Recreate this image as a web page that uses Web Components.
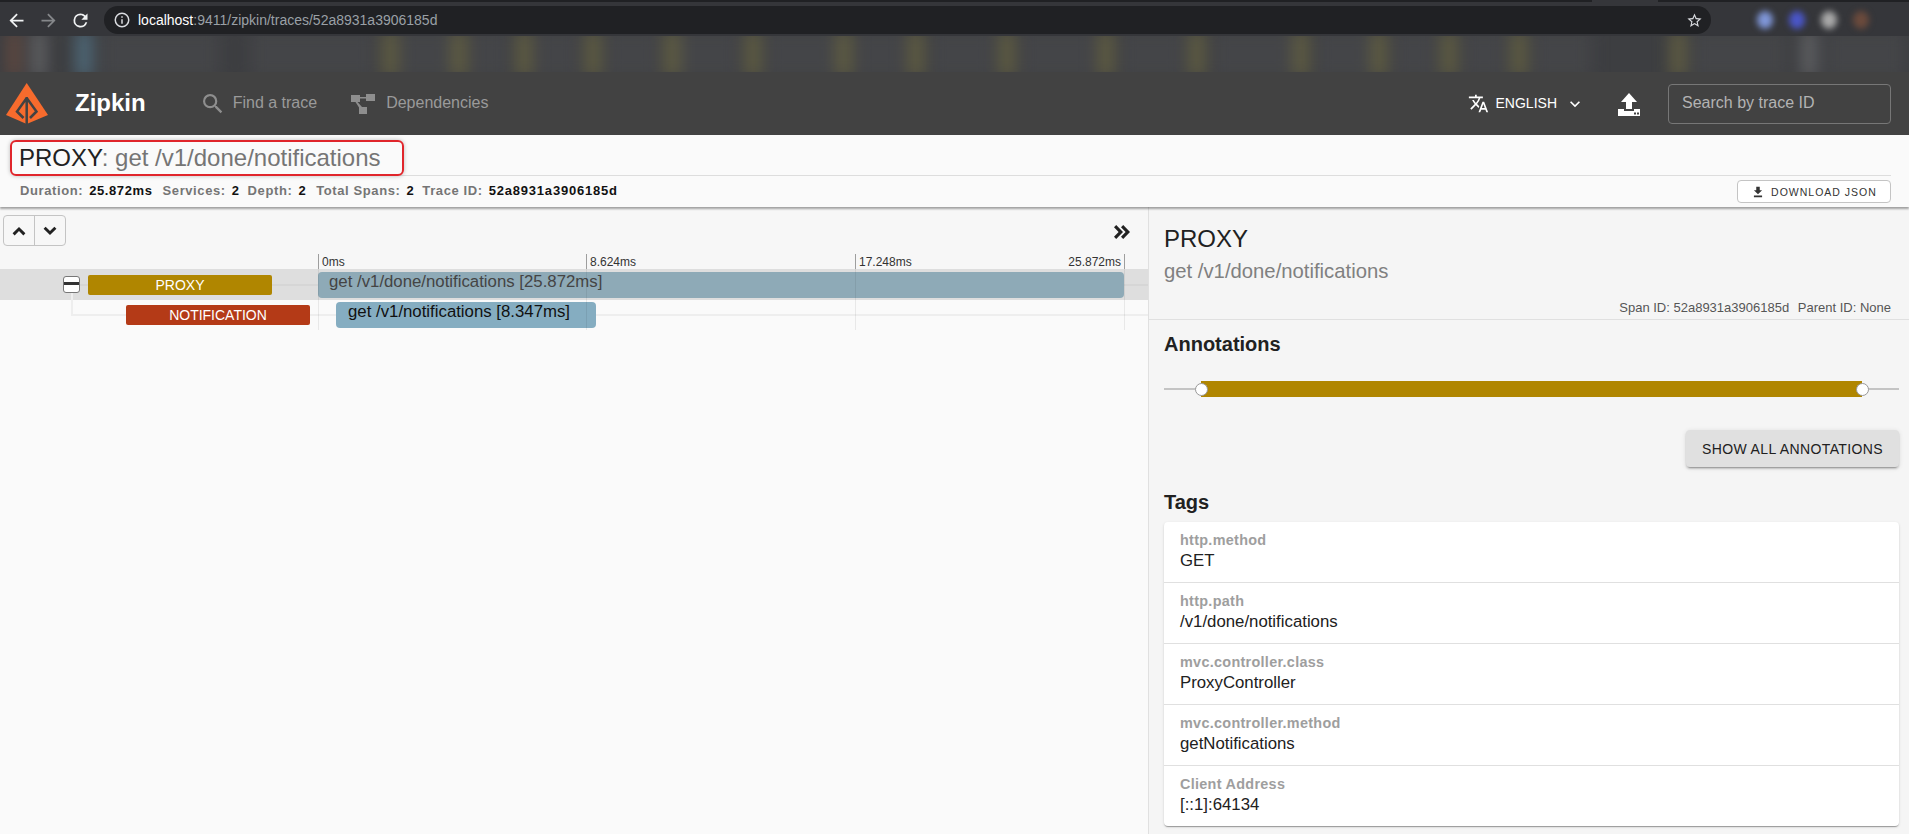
<!DOCTYPE html>
<html>
<head>
<meta charset="utf-8">
<style>
    html, body { margin: 0; padding: 0; height: 100%; }
    body {
        width: 1909px;
        height: 834px;
        overflow: hidden;
        display: flex;
        flex-direction: column;
        font-family: "Liberation Sans", Arial, sans-serif;
        background: #fafafa;
    }
</style>
</head>
<body>
<browser-chrome></browser-chrome>
<zipkin-header></zipkin-header>
<trace-summary></trace-summary>
<trace-page>
    <trace-timeline slot="left"></trace-timeline>
    <span-detail slot="right">
        <tag-row label="http.method" value="GET"></tag-row>
        <tag-row label="http.path" value="/v1/done/notifications"></tag-row>
        <tag-row label="mvc.controller.class" value="ProxyController"></tag-row>
        <tag-row label="mvc.controller.method" value="getNotifications"></tag-row>
        <tag-row label="Client Address" value="[::1]:64134"></tag-row>
    </span-detail>
</trace-page>

<script>
// blurred bookmarks: grey labels first, then the folder icons on top
const BOOKMARK_GREYS = [[100, 120], [250, 125], [400, 50], [470, 40], [535, 45], [605, 55], [680, 60], [765, 70], [855, 50], [930, 65], [1020, 75], [1120, 65], [1212, 80], [1315, 55], [1392, 45], [1462, 45], [1532, 60], [1692, 95], [1825, 80]];
const BOOKMARK_ICONS = [
    [8, 12, '#664a40'], [33, 12, '#666769'], [76, 16, '#4f6a7a'],
    ...[390, 459, 524, 593, 672, 753, 844, 916, 1007, 1106, 1197, 1301, 1379, 1449, 1519, 1678].map(x => [x - 8, 16, '#605d42']),
    [1802, 14, '#626366']
];

const chromeTemplate = document.createElement('template');
chromeTemplate.innerHTML = `
<style>
    :host { display: block; height: 72px; background: #35363a; flex: none; overflow: hidden; }
    .tabs { height: 2px; display: flex; background: #202124; }
    .tabs i { display: block; width: 66px; margin-left: 1592px; background: #35363a; }
    .toolbar { height: 34px; display: flex; align-items: center; padding-top: 2px; box-sizing: border-box; }
    .nav { width: 104px; display: flex; align-items: center; flex: none; padding-left: 6px; box-sizing: border-box; gap: 11px; }
    .nav svg { width: 21px; height: 21px; fill: #f1f3f4; flex: none; }
    .nav svg.off { fill: #85878a; }
    .omnibox {
        width: 1607px; height: 28px; flex: none;
        background: #202124; border-radius: 14px;
        display: flex; align-items: center;
        font-size: 14px; color: #9aa0a6;
        box-sizing: border-box; padding-left: 9px;
    }
    .omnibox b { font-weight: normal; color: #fff; }
    .omnibox svg { width: 18px; height: 18px; fill: #dadce0; margin-right: 7px; flex: none; }
    .omnibox .star { margin: 0 8px 0 auto; width: 17px; height: 17px; }
    .ext { display: flex; align-items: center; gap: 16px; padding-left: 46px; filter: blur(3px); }
    .ext i { width: 16px; height: 18px; border-radius: 50%; display: block; }
    .clip { height: 36px; overflow: hidden; background: #3d3e41; }
    .bookmarks { height: 36px; position: relative; filter: blur(8px); }
    .bookmarks i { position: absolute; top: -6px; height: 48px; }
</style>
<div class="tabs"><i></i></div>
<div class="toolbar">
    <div class="nav">
        <svg viewBox="0 0 24 24"><path d="M20 11H7.830l5.590-5.590L12 4l-8 8 8 8 1.410-1.410L7.830 13H20v-2z"/></svg>
        <svg class="off" viewBox="0 0 24 24"><path d="M12 4l-1.410 1.410L16.170 11H4v2h12.170l-5.580 5.590L12 20l8-8z"/></svg>
        <svg viewBox="0 0 24 24"><path d="M17.650 6.350A7.960 7.960 0 0 0 12 4a8 8 0 1 0 7.730 10h-2.080A6 6 0 1 1 12 6c1.660 0 3.140.69 4.220 1.780L13 11h7V4l-2.350 2.350z"/></svg>
    </div>
    <div class="omnibox">
        <svg viewBox="0 0 24 24"><path d="M11 7h2v2h-2zm0 4h2v6h-2zm1-9a10 10 0 1 0 0 20 10 10 0 0 0 0-20zm0 18a8 8 0 1 1 0-16 8 8 0 0 1 0 16z"/></svg>
        <span><b>localhost</b>:9411/zipkin/traces/52a8931a3906185d</span>
        <svg class="star" viewBox="0 0 24 24"><path d="M22 9.240l-7.190-.62L12 2 9.190 8.630 2 9.240l5.460 4.730L5.820 21 12 17.270 18.180 21l-1.630-7.030L22 9.240zM12 15.400l-3.760 2.270 1-4.280-3.320-2.880 4.380-.38L12 6.100l1.710 4.040 4.380.38-3.320 2.880 1 4.280L12 15.400z"/></svg>
    </div>
    <div class="ext">
        <i style="background:#7f96d8"></i>
        <i style="background:#4a56c8"></i>
        <i style="background:#a9a9a9"></i>
        <i style="background:#6b4a3c"></i>
    </div>
</div>
<div class="clip"><div class="bookmarks"></div></div>
`;

class BrowserChrome extends HTMLElement {
    constructor() {
        super();
        this.attachShadow({ mode: 'open' });
        this.shadowRoot.appendChild(chromeTemplate.content.cloneNode(true));
        const bar = this.shadowRoot.querySelector('.bookmarks');
        const blobs = BOOKMARK_GREYS.map(([x, w]) => [x, w, '#444548']).concat(BOOKMARK_ICONS);
        blobs.forEach(([x, w, color]) => {
            const blob = document.createElement('i');
            blob.style.left = x + 'px';
            blob.style.width = w + 'px';
            blob.style.background = color;
            bar.appendChild(blob);
        });
    }
}

const headerTemplate = document.createElement('template');
headerTemplate.innerHTML = `
<style>
    :host {
        display: flex; align-items: center; flex: none;
        height: 63px; background: #424242; color: #fff;
        box-sizing: border-box; padding: 0 18px 0 6px;
    }
    .logo { width: 42px; height: 41px; flex: none; }
    .brand { font-size: 24px; font-weight: bold; margin-left: 27px; padding-bottom: 2px; }
    .nav { display: flex; align-items: center; color: #9a9a9a; font-size: 16px; }
    .nav span { padding-bottom: 2px; }
    .nav svg { fill: #8e8e8e; flex: none; }
    .find { margin-left: 56px; }
    .find svg { width: 22px; height: 22px; margin-right: 9px; }
    .deps { margin-left: 34px; }
    .deps svg { width: 24px; height: 20px; margin-right: 11px; }
    .spacer { flex: 1; }
    .lang { display: flex; align-items: center; font-size: 14px; }
    .lang span { padding-bottom: 1px; }
    .lang svg { fill: #fff; }
    .lang .tr { width: 21px; height: 21px; margin-right: 7px; }
    .lang .chev { width: 20px; height: 20px; margin-left: 8px; }
    .upload { width: 24px; height: 24px; margin-left: 32px; fill: #fff; flex: none; }
    .search {
        width: 223px; height: 40px; margin-left: 27px; flex: none;
        border: 1px solid #777; border-radius: 4px;
        box-sizing: border-box; padding: 0 0 2px 13px;
        display: flex; align-items: center;
        font-size: 16px; color: #b3b3b3;
    }
</style>
<svg class="logo" viewBox="0 0 42 41">
    <path fill="#f76b2d" d="M20.700 0 42 32 20.700 41 0 32z"/>
    <path fill="none" stroke="#424242" stroke-width="2.500" d="M20.700 15 11 28.500 17.500 35M20.700 15 30.500 28.500 24 35M20.700 14V41"/>
</svg>
<span class="brand">Zipkin</span>
<div class="nav find">
    <svg viewBox="0 0 24 24"><path d="M15.500 14h-.79l-.28-.27A6.470 6.470 0 0 0 16 9.500 6.500 6.500 0 1 0 9.500 16c1.610 0 3.090-.59 4.230-1.570l.27.28v.79l5 4.990L20.490 19l-4.990-5zm-6 0C7.010 14 5 11.990 5 9.500S7.010 5 9.500 5 14 7.010 14 9.500 11.990 14 9.500 14z" transform="translate(-2.500 -2.500) scale(1.2)"/></svg>
    <span>Find a trace</span>
</div>
<div class="nav deps">
    <svg viewBox="0 0 24 20"><path d="M0 1h9v2h6V0h9v7h-9V4.500H9V8H6.500l4.500 5h5v7H8v-6.500L4.500 8H0z"/></svg>
    <span>Dependencies</span>
</div>
<div class="spacer"></div>
<div class="lang">
    <svg class="tr" viewBox="0 0 24 24"><path d="M12.870 15.070l-2.540-2.510.03-.03A17.520 17.520 0 0 0 14.070 6H17V4h-7V2H8v2H1v1.990h11.170C11.500 7.920 10.440 9.750 9 11.350 8.070 10.320 7.300 9.190 6.690 8h-2c.73 1.630 1.730 3.170 2.980 4.560l-5.090 5.020L4 19l5-5 3.110 3.110.76-2.040zM18.500 10h-2L12 22h2l1.120-3h4.750L21 22h2l-4.500-12zm-2.620 7l1.620-4.330L19.120 17h-3.240z"/></svg>
    <span>ENGLISH</span>
    <svg class="chev" viewBox="0 0 24 24"><path d="M7.410 8.590 12 13.170l4.590-4.580L18 10l-6 6-6-6z"/></svg>
</div>
<svg class="upload" viewBox="0 0 24 24"><path d="M12 1 20 10h-5v7H9v-7H4zM1 17h6v2h10v-2h6v7H1zM17 20.500h2v2h-2zM20 20.500h2v2h-2z" fill-rule="evenodd"/></svg>
<div class="search">Search by trace ID</div>
`;

class ZipkinHeader extends HTMLElement {
    constructor() {
        super();
        this.attachShadow({ mode: 'open' });
        this.shadowRoot.appendChild(headerTemplate.content.cloneNode(true));
    }
}

const summaryTemplate = document.createElement('template');
summaryTemplate.innerHTML = `
<style>
    :host {
        display: block; flex: none; height: 72px;
        background: #fafafa;
        box-shadow: 0 2px 2px rgba(0,0,0,.35);
        position: relative; z-index: 2;
        box-sizing: border-box; padding: 5px 18px 0 16px;
    }
    .title {
        display: inline-block; box-sizing: border-box;
        height: 36px; width: 394px; margin-left: -6px;
        border: 2px solid #e0252b; border-radius: 6px;
        box-shadow: 0 0 4px rgba(0,0,0,.25);
        padding-left: 7px; line-height: 32px;
        font-size: 24px; color: #757575; white-space: nowrap;
        position: relative;
    }
    .title b { font-weight: normal; color: #212121; }
    .titlebar { height: 35px; border-bottom: 1px solid #ddd; }
    .info { display: flex; align-items: center; height: 29px; padding-left: 4px; font-size: 13px; font-weight: bold; letter-spacing: .6px; }
    .info span { color: #757575; margin-right: 6px; }
    .info b { color: #111; margin-right: 10px; }
    .info b.num { margin-right: 8px; }
    .info b.id { margin-right: 0; letter-spacing: .8px; }
    button {
        margin-left: auto; width: 154px; height: 23px; margin-top: 2px; flex: none;
        display: flex; align-items: center; justify-content: center;
        background: #fff; border: 1px solid #c4c4c4; border-radius: 4px;
        font: 10.500px "Liberation Sans", Arial, sans-serif; letter-spacing: 1px;
        color: #333; padding: 0;
    }
    button svg { width: 14px; height: 14px; margin-right: 6px; fill: #333; }
</style>
<div class="titlebar"><div class="title"><b>PROXY</b>: get /v1/done/notifications</div></div>
<div class="info">
    <span>Duration:</span><b>25.872ms</b>
    <span>Services:</span><b class="num">2</b>
    <span>Depth:</span><b>2</b>
    <span>Total Spans:</span><b class="num">2</b>
    <span>Trace ID:</span><b class="id">52a8931a3906185d</b>
    <button><svg viewBox="0 0 24 24"><path d="M19 9h-4V3H9v6H5l7 7 7-7zM5 18v3h14v-3z"/></svg>DOWNLOAD JSON</button>
</div>
`;

class TraceSummary extends HTMLElement {
    constructor() {
        super();
        this.attachShadow({ mode: 'open' });
        this.shadowRoot.appendChild(summaryTemplate.content.cloneNode(true));
    }
}

const pageTemplate = document.createElement('template');
pageTemplate.innerHTML = `
<style>
    :host { display: grid; grid-template-columns: 1148px 761px; flex: 1; min-height: 0; }
</style>
<slot name="left"></slot>
<slot name="right"></slot>
`;

class TracePage extends HTMLElement {
    constructor() {
        super();
        this.attachShadow({ mode: 'open' });
        this.shadowRoot.appendChild(pageTemplate.content.cloneNode(true));
    }
}

const timelineTemplate = document.createElement('template');
timelineTemplate.innerHTML = `
<style>
    :host { display: block; background: #fafafa; position: relative; }
    .tools {
        height: 47px; background: #f7f7f7; box-sizing: border-box;
        display: flex; align-items: flex-start; justify-content: space-between;
        padding: 8px 18px 0 3px;
    }
    .updown {
        display: flex; width: 63px; height: 31px; box-sizing: border-box;
        border: 1px solid #c4c4c4; border-radius: 4px;
    }
    .updown div { flex: 1; display: flex; align-items: center; justify-content: center; }
    .updown div + div { border-left: 1px solid #c4c4c4; }
    .updown svg { width: 14px; height: 14px; fill: #222; }
    .collapse { width: 16px; height: 14px; margin-top: 10px; fill: #222; }
    .ticks { display: block; height: 15px; background: #f7f7f7; position: relative; font-size: 12px; color: #333; }
    .ticks span { position: absolute; top: 0; height: 100%; padding-left: 3px; border-left: 1px solid #aaa; line-height: 17px; white-space: nowrap; }
    .ticks .last { padding: 0 3px 0 0; border-left: 0; border-right: 1px solid #aaa; right: 23px; }
    .row { height: 31px; position: relative; }
    .row.sel { background: #dedede; }
    .rule { position: absolute; left: 72px; right: 0; top: 15px; height: 2px; background: #d6d6d6; }
    .row.kid .rule { left: 71px; top: 14px; background: #eee; }
    .elbow { position: absolute; left: 71px; top: -7px; width: 2px; height: 22px; background: #eee; }
    .minus {
        position: absolute; left: 63px; top: 7px; width: 17px; height: 17px;
        box-sizing: border-box; border: 1px solid #777; border-radius: 3px; background: #fff;
    }
    .minus::after { content: ""; display: block; height: 3px; margin-top: 5px; background: #333; }
    .svc {
        position: absolute; top: 6px; height: 20px; border-radius: 2px;
        color: #fff; font-size: 14px; line-height: 20px; text-align: center; box-sizing: border-box;
    }
    .bar {
        position: absolute; top: 3px; height: 26px; border-radius: 4px; box-sizing: border-box;
        font-size: 16.800px; line-height: 20px; white-space: nowrap;
    }
    .kid .svc { top: 5px; }
    .kid .bar { top: 2px; }
    .gridline { position: absolute; top: 47px; height: 76px; width: 1px; background: rgba(0,0,0,.07); z-index: 1; pointer-events: none; }
</style>
<div class="tools">
    <div class="updown">
        <div><svg viewBox="0 0 24 24"><path d="M12 5 1 16l3.500 3.500L12 12l7.500 7.500L23 16z"/></svg></div>
        <div><svg viewBox="0 0 24 24"><path d="M12 19 1 8l3.500-3.500L12 12l7.500-7.500L23 8z"/></svg></div>
    </div>
    <svg class="collapse" viewBox="0 0 16 14"><path d="M2.200 0 9 7l-6.800 7L0 11.700 4.600 7 0 2.300zM9.200 0 16 7l-6.800 7L7 11.700 11.600 7 7 2.300z"/></svg>
</div>
<div class="ticks">
    <span style="left:318px">0ms</span>
    <span style="left:586px">8.624ms</span>
    <span style="left:855px">17.248ms</span>
    <span class="last">25.872ms</span>
</div>
<i class="gridline" style="left:318px"></i>
<i class="gridline" style="left:586px"></i>
<i class="gridline" style="left:855px"></i>
<i class="gridline" style="left:1124px"></i>
<div class="row sel">
    <div class="rule"></div>
    <div class="minus"></div>
    <div class="svc" style="left:88px;width:184px;background:#b08600">PROXY</div>
    <div class="bar" style="left:318px;width:806px;background:#8eaab7;color:#444;padding-left:11px">get /v1/done/notifications [25.872ms]</div>
</div>
<div class="row kid">
    <div class="rule"></div>
    <div class="elbow"></div>
    <div class="svc" style="left:126px;width:184px;background:#b43a17">NOTIFICATION</div>
    <div class="bar" style="left:336px;width:260px;background:#85adc1;color:#111;padding-left:12px">get /v1/notifications [8.347ms]</div>
</div>
`;

class TraceTimeline extends HTMLElement {
    constructor() {
        super();
        this.attachShadow({ mode: 'open' });
        this.shadowRoot.appendChild(timelineTemplate.content.cloneNode(true));
    }
}

const detailTemplate = document.createElement('template');
detailTemplate.innerHTML = `
<style>
    :host { display: block; background: #f5f5f5; border-left: 1px solid #e0e0e0; box-sizing: border-box; }
    .head { height: 113px; border-bottom: 1px solid #e0e0e0; padding: 18px 18px 0 15px; box-sizing: border-box; }
    .svc { font-size: 24px; line-height: 28px; color: #212121; }
    .name { font-size: 20.300px; line-height: 24px; color: #808080; margin-top: 6px; }
    .ids { text-align: right; font-size: 13px; color: #555; margin-top: 18px; line-height: 14px; }
    .ids span { margin-left: 5px; }
    .body { padding: 0 10px 0 15px; }
    h2 { font-size: 20px; line-height: 24px; font-weight: bold; color: #212121; margin: 0; }
    .annot { padding-top: 12px; }
    .track { position: relative; height: 16px; margin-top: 25px; }
    .track .line { position: absolute; left: 0; right: 0; top: 7px; height: 2px; background: #c4c4c4; }
    .track .fill { position: absolute; left: 37px; width: 661px; top: 0; height: 16px; background: #b08600; }
    .track i { position: absolute; top: 2px; width: 13px; height: 13px; border-radius: 50%; background: #fff; border: 1px solid #999; box-sizing: border-box; }
    .actions { display: flex; justify-content: flex-end; margin-top: 33px; }
    button {
        height: 37px; width: 213px; border: 0; border-radius: 4px; background: #e0e0e0;
        font: 14px "Liberation Sans", Arial, sans-serif; letter-spacing: .4px; color: #212121; padding: 0;
        box-shadow: 0 3px 1px -2px rgba(0,0,0,.2), 0 2px 2px 0 rgba(0,0,0,.14), 0 1px 5px 0 rgba(0,0,0,.12);
    }
    .tags-title { margin-top: 23px; }
    .card {
        margin-top: 8px; background: #fff; border-radius: 4px;
        box-shadow: 0 2px 1px -1px rgba(0,0,0,.2), 0 1px 1px 0 rgba(0,0,0,.14), 0 1px 3px 0 rgba(0,0,0,.12);
    }
</style>
<div class="head">
    <div class="svc">PROXY</div>
    <div class="name">get /v1/done/notifications</div>
    <div class="ids"><span>Span ID: 52a8931a3906185d</span> <span>Parent ID: None</span></div>
</div>
<div class="body">
    <div class="annot">
        <h2>Annotations</h2>
        <div class="track">
            <div class="line"></div>
            <div class="fill"></div>
            <i style="left:31px"></i>
            <i style="left:692px"></i>
        </div>
        <div class="actions"><button>SHOW ALL ANNOTATIONS</button></div>
    </div>
    <h2 class="tags-title">Tags</h2>
    <div class="card"><slot></slot></div>
</div>
`;

class SpanDetail extends HTMLElement {
    constructor() {
        super();
        this.attachShadow({ mode: 'open' });
        this.shadowRoot.appendChild(detailTemplate.content.cloneNode(true));
    }
}

const tagRowTemplate = document.createElement('template');
tagRowTemplate.innerHTML = `
<style>
    :host { display: block; height: 61px; box-sizing: border-box; padding: 10px 16px 0; border-bottom: 1px solid #e0e0e0; }
    :host(:last-child) { border-bottom: 0; height: 60px; }
    .label { font-size: 14.400px; font-weight: bold; letter-spacing: .3px; line-height: 16px; color: #9e9e9e; }
    .value { font-size: 16.800px; line-height: 20px; color: #212121; margin-top: 3px; }
</style>
<div class="label"></div>
<div class="value"></div>
`;

class TagRow extends HTMLElement {
    constructor() {
        super();
        this.attachShadow({ mode: 'open' });
        this.shadowRoot.appendChild(tagRowTemplate.content.cloneNode(true));
    }

    connectedCallback() {
        this.shadowRoot.querySelector('.label').textContent = this.getAttribute('label');
        this.shadowRoot.querySelector('.value').textContent = this.getAttribute('value');
    }
}

window.customElements.define('browser-chrome', BrowserChrome);
window.customElements.define('zipkin-header', ZipkinHeader);
window.customElements.define('trace-summary', TraceSummary);
window.customElements.define('trace-page', TracePage);
window.customElements.define('trace-timeline', TraceTimeline);
window.customElements.define('span-detail', SpanDetail);
window.customElements.define('tag-row', TagRow);
</script>
</body>
</html>
